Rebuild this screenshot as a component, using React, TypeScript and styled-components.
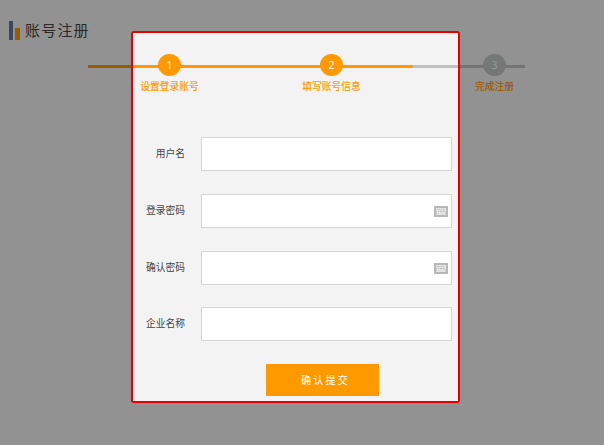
import React from "react";
import styled, { createGlobalStyle } from "styled-components";

const ORANGE = "#ff9900";

const GlobalStyle = createGlobalStyle`
  * { box-sizing: border-box; }
  body {
    margin: 0;
    overflow: hidden;
    background: #f3f3f3;
    font-family: "Noto Sans CJK SC", "Noto Sans", sans-serif;
  }
`;

const Page = styled.main`
  position: relative;
  width: 604px;
  height: 445px;
  overflow: hidden;
  background: #f3f3f3;
  padding-top: 20px;
`;

const Header = styled.header`
  display: flex;
  align-items: center;
  height: 21px;
  padding-left: 9px;
`;

const Logo = styled.svg`
  display: block;
  width: 11px;
  height: 19px;
  margin-right: 5px;
`;

const Title = styled.h1`
  margin: 0;
  padding-bottom: 2px;
  font-size: 15px;
  line-height: 19px;
  font-weight: 400;
  letter-spacing: 1.2px;
  color: #444;
`;

const Steps = styled.ol`
  display: grid;
  grid-template-columns: 162px 163px 112px;
  list-style: none;
  width: 437px;
  margin: 13px 0 0 88px;
  padding: 0;
  background: linear-gradient(${ORANGE}, ${ORANGE}) 0 11px / 324.5px 3px no-repeat,
    linear-gradient(#c1c1c1, #c1c1c1) 0 11px / 437px 3px no-repeat;
`;

const Step = styled.li`
  display: flex;
  flex-direction: column;
  align-items: center;
  width: 163px;
`;

const StepDot = styled.span<{ $done: boolean }>`
  width: 23px;
  height: 22px;
  border-radius: 50%;
  background: ${(p) => (p.$done ? ORANGE : "#c4c8c6")};
  color: #fff;
  font-family: "Open Sans", sans-serif;
  font-size: 10.5px;
  line-height: 23px;
  text-align: center;
`;

const StepLabel = styled.span`
  margin-top: 3px;
  font-size: 9.75px;
  line-height: 14px;
  font-weight: 500;
  white-space: nowrap;
  color: ${ORANGE};
`;

const Form = styled.form`
  display: grid;
  grid-auto-rows: 34px;
  row-gap: 22.8px;
  margin-top: 44px;
`;

const Field = styled.label`
  display: grid;
  grid-template-columns: 185px 251px;
  column-gap: 16px;
  align-items: center;
`;

const FieldLabel = styled.span`
  padding-bottom: 1px;
  font-size: 9.75px;
  line-height: 15px;
  text-align: right;
  color: #444;
`;

const InputBox = styled.span`
  display: flex;
  align-items: center;
  height: 34px;
  padding-right: 3px;
  border: 1px solid #d6d6d6;
  background: #fff;
`;

const Input = styled.input`
  flex: 1;
  min-width: 0;
  height: 100%;
  padding: 0 8px;
  border: 0;
  outline: 0;
  background: transparent;
  font-size: 10px;
`;

const KeyboardSvg = styled.svg`
  display: block;
  width: 14px;
  height: 11px;
  margin-top: 1px;
`;

const Submit = styled.button`
  width: 113px;
  height: 32px;
  margin-left: 266px;
  padding: 0 0 0 6px;
  border: 0;
  background: ${ORANGE};
  color: #fff;
  font-family: inherit;
  font-size: 10px;
  line-height: 32px;
  letter-spacing: 2.3px;
`;

/* Highlight frame that dims everything outside of it. */
const Spotlight = styled.div`
  position: absolute;
  left: 131px;
  top: 31px;
  width: 329px;
  height: 372px;
  border: 2px solid #e80000;
  border-radius: 2px;
  box-shadow: 0 0 0 700px rgba(0, 0, 0, 0.4);
  pointer-events: none;
`;

const KeyboardIcon = () => (
  <KeyboardSvg viewBox="0 0 14 11" shapeRendering="crispEdges">
    <rect width="14" height="11" fill="#b8b8b8" />
    <rect x="2" y="2" width="10" height="7" fill="#e2e2e2" />
    <path
      d="M3 3h1v1H3zM5 3h1v1H5zM7 3h1v1H7zM9 3h1v1H9zM2 5h1v1H2zM4 5h1v1H4zM6 5h2v1H6zM9 5h2v1H9zM2 7h1v1H2zM11 7h1v1h-1z"
      fill="#bcbcbc"
    />
  </KeyboardSvg>
);

const steps = [
  { label: "设置登录账号", done: true },
  { label: "填写账号信息", done: true },
  { label: "完成注册", done: false },
];

const fields = [
  { label: "用户名", secret: false },
  { label: "登录密码", secret: true },
  { label: "确认密码", secret: true },
  { label: "企业名称", secret: false },
];

export default function App() {
  return (
    <>
      <GlobalStyle />
      <Page>
        <Header>
          <Logo viewBox="0 0 11 19">
            <rect width="4" height="19" fill="#64789b" />
            <rect x="6" y="7" width="5" height="12" fill={ORANGE} />
          </Logo>
          <Title>账号注册</Title>
        </Header>
        <Steps>
          {steps.map((s, i) => (
            <Step key={s.label}>
              <StepDot $done={s.done}>{i + 1}</StepDot>
              <StepLabel>{s.label}</StepLabel>
            </Step>
          ))}
        </Steps>
        <Form>
          {fields.map((f) => (
            <Field key={f.label}>
              <FieldLabel>{f.label}</FieldLabel>
              <InputBox>
                <Input type={f.secret ? "password" : "text"} />
                {f.secret && <KeyboardIcon />}
              </InputBox>
            </Field>
          ))}
          <Submit type="button">确认提交</Submit>
        </Form>
        <Spotlight />
      </Page>
    </>
  );
}
